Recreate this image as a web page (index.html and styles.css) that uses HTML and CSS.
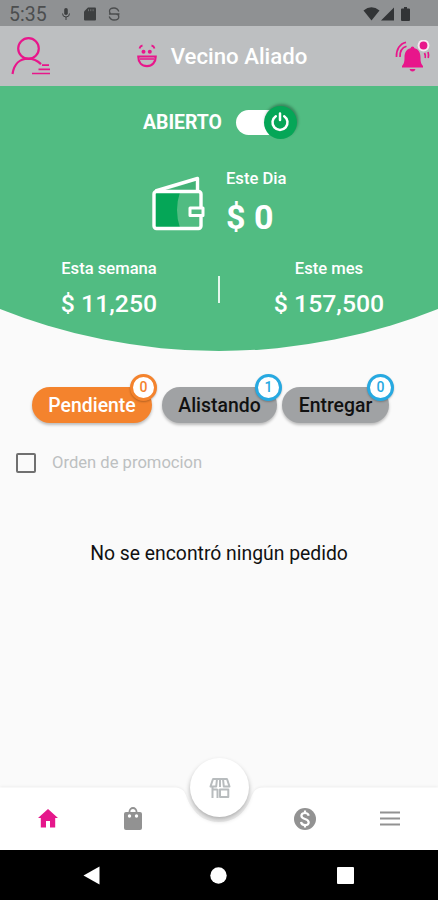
FILE: index.html
```html
<!DOCTYPE html>
<html lang="es">
<head>
    <meta charset="UTF-8">
    <meta name="viewport" content="width=device-width, initial-scale=1.0">
    <title>Vecino Aliado</title>
    <link rel="stylesheet" href="styles.css">
</head>
<body>
    <div class="statusbar">
        <span class="clock">5:35</span>
        <svg class="mic" width="10" height="14" viewBox="0 0 10 14"><rect x="3.2" y="1" width="3.600" height="7" rx="1.8" fill="#3d3f40"/><path d="M1.5 6.5a3.5 3.5 0 0 0 7 0M5 10v3" fill="none" stroke="#3d3f40" stroke-width="1"/></svg>
        <svg class="sdcard" width="12" height="14" viewBox="0 0 12 14"><path d="M4 0.5h7a1 1 0 0 1 1 1v11a1 1 0 0 1-1 1H1a1 1 0 0 1-1-1V4.5z" fill="#3d3f40"/><path d="M4.5 2.2v2M6.8 2.2v2M9.1 2.2v2" stroke="#6d6f70"/></svg>
        <svg class="sync" width="12" height="14" viewBox="0 0 12 14"><path d="M10.800 4.500Q9.500 1 6 1 1.500 1 1.500 4T4 7h4q2.800 0 2.800 3T6 13Q2.500 13 1.200 9.500M1 7h10.500" fill="none" stroke="#4c4e4f" stroke-width="1.300"/></svg>
        <div class="signals">
            <svg width="17" height="14" viewBox="0 0 17 14"><path d="M0.500 3.500Q8.500-3 16.500 3.500L8.500 13.500z" fill="#323436"/></svg>
            <svg width="13" height="14" viewBox="0 0 13 14"><path d="M13 0.500v13H0z" fill="#323436"/></svg>
            <svg class="battery" width="9" height="14" viewBox="0 0 9 14"><path d="M3 0h3v1.500h2q1 0 1 1V13q0 1-1 1H1q-1 0-1-1V2.500q0-1 1-1h2z" fill="#323436"/></svg>
        </div>
    </div>

    <div class="header">
        <svg class="profile" width="40" height="38" viewBox="0 0 40 38" fill="none" stroke="#e8168b" stroke-width="2.200">
            <circle cx="17.500" cy="11.500" r="10.300"/>
            <path d="M1.500 37C3 27 9 21.600 17 21.600c5 0 9.500 2 13 5.500"/>
            <path d="M31 28.200h7M27.500 32.300H39M21 36.500h18" stroke-width="1.700"/>
        </svg>
        <div class="brand">
            <svg width="20" height="24" viewBox="0 0 20 24" fill="none" stroke="#e8168b" stroke-width="2.200">
                <path d="M2.500 4.500Q3 2 5.500 1.500M17.500 4.500Q17 2 14.500 1.500" stroke-width="1.800"/>
                <circle cx="6.500" cy="7.700" r="2" fill="#e8168b" stroke="none"/>
                <circle cx="12.800" cy="7.700" r="2" fill="#e8168b" stroke="none"/>
                <path d="M1.300 12.500h17.400c0 6-3.500 9.700-8.700 9.700s-8.700-3.700-8.700-9.700z"/>
                <path d="M3 15h14" stroke-width="1.500"/>
            </svg>
            <h1>Vecino Aliado</h1>
        </div>
        <svg class="bell" width="35" height="32" viewBox="0 0 35 32">
            <path d="M17.500 8c5.500 0 8 4 8 9.500 0 5 .8 6.500 2.500 8.500v1.500H7V26c1.700-2 2.500-3.500 2.500-8.500C9.500 12 12 8 17.500 8z" fill="#e8168b"/>
            <circle cx="17.500" cy="8.500" r="1.900" fill="#e8168b"/>
            <path d="M14.500 29h6q-.7 2.500-3 2.500t-3-2.500z" fill="#e8168b"/>
            <path d="M1.500 17C1 9.500 5 3.500 11 2.300M5 17C4.700 11 7.500 7.500 11.500 6.300M29.500 13q1.200 2.200.7 5M33 12q1 3 .2 6" fill="none" stroke="#e8168b" stroke-width="1.700"/>
            <circle cx="28.500" cy="5.500" r="5.900" fill="#f7e8f1"/>
            <circle cx="28.500" cy="5.500" r="3.900" fill="#e8168b"/>
        </svg>
    </div>

    <div class="summary">
        <div class="open-row">
            <span>ABIERTO</span>
            <div class="switch">
                <div class="knob">
                    <svg width="20" height="20" viewBox="0 0 20 20" fill="none" stroke="#fff" stroke-width="2.500" stroke-linecap="round"><path d="M5.800 4.200a7.500 7.500 0 1 0 8.400 0M10 1.500v6.500"/></svg>
                </div>
            </div>
        </div>
        <div class="today">
            <svg width="53" height="56" viewBox="0 0 53 56" fill="none" stroke="#fff" stroke-width="3.400" stroke-linejoin="round">
                <path d="M3 16h25q-6 18 0 36H3z" fill="#05a657" stroke="none"/>
                <path d="M16 14L46 4v10z" fill="#43b277" stroke="none"/>
                <path d="M3.500 15L45.500 2.500V15"/>
                <rect x="2" y="15.500" width="47" height="37" rx="2.500"/>
                <rect x="38" y="32" width="13" height="7.500" fill="#51bc82" stroke-width="3"/>
            </svg>
            <div class="today-text">
                <span class="label">Este Dia</span>
                <span class="big">$ 0</span>
            </div>
        </div>
        <div class="totals">
            <div class="total">
                <span class="label">Esta semana</span>
                <span class="amount">$ 11,250</span>
            </div>
            <div class="divider"></div>
            <div class="total">
                <span class="label">Este mes</span>
                <span class="amount">$ 157,500</span>
            </div>
        </div>
    </div>

    <div class="tabs">
        <div class="tab active">Pendiente<span class="badge">0</span></div>
        <div class="tab second">Alistando<span class="badge">1</span></div>
        <div class="tab third">Entregar<span class="badge">0</span></div>
    </div>

    <div class="promo">
        <span class="checkbox"></span>
        <span class="promo-text">Orden de promocion</span>
    </div>

    <p class="empty">No se encontró ningún pedido</p>

    <div class="navbar">
        <svg class="navshape" width="438" height="63" viewBox="0 0 438 63"><path d="M0 .5H174C187 .5 185 10 191 19c7 11 16 16 28 16s21-5 28-16c6-9 4-18.500 17-18.500h174V63H0z" fill="#fff"/></svg>
        <div class="item">
            <svg width="20" height="19" viewBox="0 0 20 19"><path d="M10 0l10 9h-2.800v9.500H12V12H8v6.500H2.800V9H0z" fill="#e5178b"/></svg>
        </div>
        <div class="item">
            <svg width="18" height="23" viewBox="0 0 18 23"><path d="M5.500 6V4.500a3.500 3.500 0 0 1 7 0V6" fill="none" stroke="#929292" stroke-width="1.800"/><rect y="5" width="18" height="18" rx="2" fill="#929292"/><circle cx="5.500" cy="9" r="1.700" fill="#fff"/><circle cx="12.500" cy="9" r="1.700" fill="#fff"/></svg>
        </div>
        <div class="item"></div>
        <div class="item">
            <svg width="22" height="22" viewBox="0 0 22 22"><circle cx="11" cy="11" r="11" fill="#929292"/><path d="M14.700 7.800Q14.200 5 11 5 7.400 5 7.400 7.800 7.400 10 11 11t3.700 3.400Q14.700 17 11 17q-3.500 0-4-3M11 2.500V5M11 17v2.500" fill="none" stroke="#fff" stroke-width="2.200"/></svg>
        </div>
        <div class="item">
            <svg width="20" height="15" viewBox="0 0 20 15"><path d="M0 1.500h20M0 7.500h20M0 13.500h20" stroke="#929292" stroke-width="1.800"/></svg>
        </div>
        <div class="shop">
            <svg width="22" height="22" viewBox="0 0 22 22" fill="none" stroke="#b8bcbe" stroke-width="2"><path d="M3.500 2h15M4 2L1.500 9.500h5.700L8 2M14 2l.8 7.500h5.700L18 2M11 2v8M3.500 10v11M8.500 12v9M3.500 12.500h5M11 12.500h8.300V20H11z" stroke-linejoin="round"/></svg>
        </div>
    </div>

    <div class="systembar">
        <svg width="17" height="19" viewBox="0 0 17 19"><path d="M16.500 0.500v18L0.500 9.500z" fill="#fff"/></svg>
        <svg width="17" height="17" viewBox="0 0 17 17"><circle cx="8.500" cy="8.500" r="8.200" fill="#fff"/></svg>
        <svg width="17" height="17" viewBox="0 0 17 17"><rect width="17" height="17" rx="1" fill="#fff"/></svg>
    </div>
</body>
</html>
```
FILE: styles.css
```css
* {
    box-sizing: border-box;
}
body {
    margin: 0;
    width: 438px;
    height: 900px;
    display: flex;
    flex-direction: column;
    overflow: hidden;
    background-color: #fafafa;
    font-family: Roboto, sans-serif;
}
svg {
    display: block;
    flex-shrink: 0;
}
.statusbar {
    height: 26px;
    padding: 1px 28px 0 9px;
    display: flex;
    align-items: center;
    background-color: #8f9193;
    color: #4c4e4f;
}
.clock {
    width: 52px;
    padding-top: 2px;
    font-size: 19.5px;
}
.sdcard {
    margin-left: 13px;
}
.sync {
    margin-left: 12px;
}
.signals {
    margin-left: auto;
    display: flex;
    gap: 1px;
}
.battery {
    margin-left: 6px;
}
.header {
    height: 60px;
    padding: 0 8px 0 11px;
    display: flex;
    align-items: center;
    justify-content: space-between;
    background-color: #bdbfc1;
}
.brand {
    display: flex;
    align-items: center;
    gap: 14px;
    margin-right: 2px;
}
.brand h1 {
    margin: 0;
    color: #fff;
    font-size: 22.2px;
    font-weight: 500;
}
.bell {
    margin-top: -1px;
}
.summary {
    height: 265px;
    padding-top: 15px;
    background-color: #51bc82;
    color: #fff;
    clip-path: circle(592px at 219px -327px);
}
.open-row {
    height: 42px;
    padding-left: 143px;
    display: flex;
    align-items: center;
    gap: 14px;
    font-size: 19.4px;
    font-weight: 700;
}
.switch {
    width: 61px;
    height: 25px;
    display: flex;
    align-items: center;
    justify-content: flex-end;
    border-radius: 13px;
    background: linear-gradient(to right, #fff 42px, transparent 42px);
}
.knob {
    width: 33px;
    height: 33px;
    display: flex;
    flex-shrink: 0;
    align-items: center;
    justify-content: center;
    border-radius: 50%;
    background-color: #05a657;
    box-shadow: 1px -2px 3px rgba(0, 0, 0, 0.3);
}
.today {
    height: 94px;
    padding: 33px 0 0 152px;
    display: flex;
    gap: 21px;
}
.today-text {
    display: flex;
    flex-direction: column;
    margin-top: -7px;
}
.label {
    font-size: 16.6px;
    line-height: 20px;
    font-weight: 500;
}
.big {
    margin-top: 6px;
    font-size: 34px;
    line-height: 44px;
    font-weight: 700;
}
.totals {
    margin-top: 22px;
    display: flex;
    align-items: center;
}
.total {
    flex: 1;
    display: flex;
    flex-direction: column;
    align-items: center;
}
.amount {
    margin-top: 10px;
    font-size: 24.8px;
    line-height: 30px;
    font-weight: 500;
}
.divider {
    width: 2px;
    height: 27px;
    background-color: #e4f7ec;
}
.tabs {
    margin-top: 36px;
    padding-left: 32px;
    display: flex;
}
.tab {
    position: relative;
    width: 120px;
    height: 36px;
    border-radius: 18px;
    background-color: #a0a2a4;
    box-shadow: 0 2px 3px rgba(0, 0, 0, 0.25);
    color: #111;
    font-size: 19.4px;
    line-height: 37px;
    font-weight: 500;
    text-align: center;
}
.active {
    background-color: #f4832d;
    color: #fff;
}
.second {
    width: 115px;
    margin-left: 10px;
}
.third {
    width: 107px;
    margin-left: 5px;
}
.badge {
    position: absolute;
    top: -13px;
    right: -5px;
    width: 27px;
    height: 27px;
    border: 3px solid #27a9e1;
    border-radius: 50%;
    background-color: #fff;
    box-shadow: 0 1px 2px rgba(0, 0, 0, 0.25);
    color: #27a9e1;
    font-size: 14px;
    line-height: 21px;
}
.active .badge {
    border-color: #f4832d;
    color: #f4832d;
}
.promo {
    margin: 28px 0 0 16px;
    display: flex;
    align-items: center;
    gap: 16px;
    color: #bdc0c1;
    font-size: 16.6px;
    line-height: 22px;
}
.promo-text {
    padding-top: 1px;
}
.checkbox {
    width: 20px;
    height: 20px;
    border: 2px solid #707070;
    border-radius: 2px;
}
.empty {
    margin: 67px 0 0;
    color: #111;
    font-size: 19.35px;
    line-height: 26px;
    text-align: center;
}
.navbar {
    position: relative;
    height: 63px;
    margin-top: auto;
    display: flex;
    align-items: center;
    padding: 0 5px;
}
.navshape {
    position: absolute;
    left: 0;
    top: 0;
    filter: drop-shadow(0 -1px 1px rgba(0, 0, 0, 0.05));
}
.item {
    position: relative;
    flex: 1;
    display: flex;
    justify-content: center;
}
.shop {
    position: absolute;
    left: 190px;
    top: -29px;
    width: 59px;
    height: 59px;
    display: flex;
    align-items: center;
    justify-content: center;
    border-radius: 50%;
    background-color: #fff;
    box-shadow: 0 3px 5px rgba(0, 0, 0, 0.3);
}
.systembar {
    height: 50px;
    padding: 0 84px 0 83px;
    display: flex;
    align-items: center;
    justify-content: space-between;
    background-color: #000;
}
```
